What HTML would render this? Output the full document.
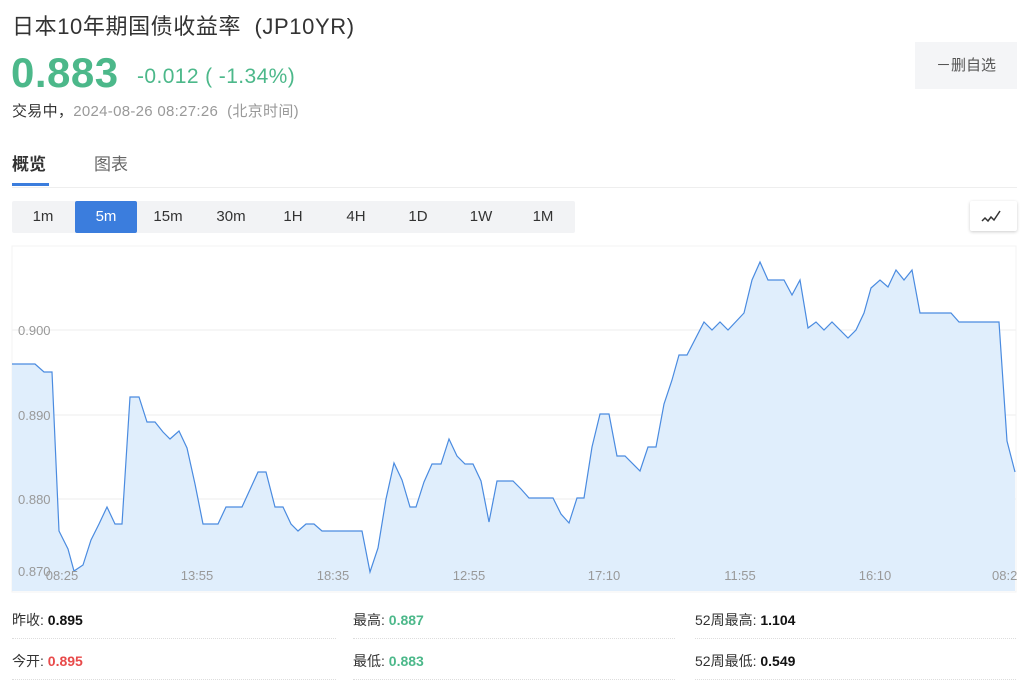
<!DOCTYPE html>
<html><head><meta charset="utf-8"><style>
*{margin:0;padding:0;box-sizing:border-box}
body{width:1024px;height:685px;overflow:hidden;background:#fff;font-family:"Liberation Sans","Noto Sans CJK SC",sans-serif;color:#333;position:relative}
.a{position:absolute;white-space:nowrap}
.per{position:absolute;left:12px;top:201px;width:563px;height:32px;background:#f2f3f5;border-radius:2px}
.per span{position:absolute;top:0;width:62px;height:32px;line-height:32px;text-align:center;font-size:15px;color:#333}
.per span.on{background:#3b7ddd;color:#fff;border-radius:2px}
.st{position:absolute;font-size:14px;color:#333}
.st b{font-weight:bold;color:#111}
.ln{position:absolute;height:0;border-top:1px dotted #ddd}
</style></head><body>
<div class="a" style="left:12px;top:9px;font-size:22px;color:#333;letter-spacing:0.6px">日本10年期国债收益率&nbsp;&nbsp;(JP10YR)</div>
<div class="a" style="left:11px;top:49px;font-size:42px;font-weight:bold;color:#4cb88a;letter-spacing:0.5px">0.883</div>
<div class="a" style="left:137px;top:65px;font-size:21px;color:#4cb88a;letter-spacing:0.4px">-0.012 ( -1.34%)</div>
<div class="a" style="left:12px;top:100px;font-size:15px;color:#333;font-weight:normal;letter-spacing:0.3px">交易中，<span style="color:#999">2024-08-26 08:27:26&nbsp;&nbsp;(北京时间)</span></div>
<div class="a" style="left:915px;top:42px;width:102px;height:47px;background:#f4f5f7;font-size:15px;color:#555;text-align:center;line-height:47px">－删自选</div>
<div class="a" style="left:12px;top:150px;font-size:17px;font-weight:bold;color:#333">概览</div>
<div class="a" style="left:94px;top:150px;font-size:17px;color:#666">图表</div>
<div class="a" style="left:12px;top:183px;width:37px;height:3px;background:#3b7ddd"></div>
<div class="a" style="left:12px;top:187px;width:1005px;height:1px;background:#eee"></div>
<div class="per"><span style="left:0">1m</span><span class="on" style="left:63px">5m</span><span style="left:125px">15m</span><span style="left:188px">30m</span><span style="left:250px">1H</span><span style="left:313px">4H</span><span style="left:375px">1D</span><span style="left:438px">1W</span><span style="left:500px">1M</span></div>
<div class="a" style="left:970px;top:201px;width:47px;height:30px;background:#fff;box-shadow:0 1px 3px rgba(0,0,0,.2);border-radius:2px">
<svg width="47" height="30"><polyline points="12,20 15,17 18,20 21,16 24,19 30,10" fill="none" stroke="#333" stroke-width="1.5"/></svg></div>
<svg class="a" style="left:0;top:0" width="1024" height="600">
<rect x="12" y="246" width="1004" height="346" fill="none" stroke="#f3f3f3"/>
<g stroke="#eee" stroke-width="1"><line x1="12" y1="330" x2="1016" y2="330"/><line x1="12" y1="415" x2="1016" y2="415"/><line x1="12" y1="499" x2="1016" y2="499"/></g>
<polygon fill="#e0eefc" points="12,591 12,364 35,364 44,372 52,372 59,531 68,549 74,571 83,565 91,540 99,524 107,507 115,524 122,524 130,397 139,397 147,422 155,422 163,432 170,439 179,431 187,448 195,484 203,524 218,524 226,507 242,507 258,472 266,472 275,507 283,507 291,524 298,531 306,524 314,524 322,531 362,531 370,572 378,548 386,499 394,463 402,480 410,507 416,507 424,482 432,464 441,464 449,439 457,456 465,464 473,464 481,481 489,522 497,481 513,481 521,489 529,498 553,498 561,514 569,523 577,498 584,498 592,447 600,414 609,414 617,456 625,456 640,471 648,447 656,447 664,404 672,380 679,355 687,355 704,322 712,330 720,322 728,330 744,313 752,280 760,262 768,280 784,280 792,295 800,280 808,328 816,322 824,330 832,322 848,338 856,330 864,313 871,288 880,280 888,287 896,270 904,280 912,270 920,313 951,313 959,322 999,322 1007,441 1015,472 1015,591"/>
<polyline fill="none" stroke="#4a8be0" stroke-width="1.2" points="12,364 35,364 44,372 52,372 59,531 68,549 74,571 83,565 91,540 99,524 107,507 115,524 122,524 130,397 139,397 147,422 155,422 163,432 170,439 179,431 187,448 195,484 203,524 218,524 226,507 242,507 258,472 266,472 275,507 283,507 291,524 298,531 306,524 314,524 322,531 362,531 370,572 378,548 386,499 394,463 402,480 410,507 416,507 424,482 432,464 441,464 449,439 457,456 465,464 473,464 481,481 489,522 497,481 513,481 521,489 529,498 553,498 561,514 569,523 577,498 584,498 592,447 600,414 609,414 617,456 625,456 640,471 648,447 656,447 664,404 672,380 679,355 687,355 704,322 712,330 720,322 728,330 744,313 752,280 760,262 768,280 784,280 792,295 800,280 808,328 816,322 824,330 832,322 848,338 856,330 864,313 871,288 880,280 888,287 896,270 904,280 912,270 920,313 951,313 959,322 999,322 1007,441 1015,472"/>
<g font-family="Liberation Sans,sans-serif" font-size="13" fill="#999">
<text x="18" y="335">0.900</text><text x="18" y="420">0.890</text><text x="18" y="504">0.880</text><text x="18" y="576">0.870</text>
<g text-anchor="middle"><text x="62" y="580">08:25</text><text x="197" y="580">13:55</text><text x="333" y="580">18:35</text><text x="469" y="580">12:55</text><text x="604" y="580">17:10</text><text x="740" y="580">11:55</text><text x="875" y="580">16:10</text></g>
<text x="992" y="580">08:2</text></g>
</svg>
<div class="st" style="left:12px;top:610px">昨收: <b>0.895</b></div>
<div class="st" style="left:353px;top:610px">最高: <b style="color:#4cb88a">0.887</b></div>
<div class="st" style="left:695px;top:610px">52周最高: <b>1.104</b></div>
<div class="st" style="left:12px;top:651px">今开: <b style="color:#e84a4a">0.895</b></div>
<div class="st" style="left:353px;top:651px">最低: <b style="color:#4cb88a">0.883</b></div>
<div class="st" style="left:695px;top:651px">52周最低: <b>0.549</b></div>
<div class="ln" style="left:12px;top:638px;width:324px"></div><div class="ln" style="left:353px;top:638px;width:322px"></div><div class="ln" style="left:695px;top:638px;width:321px"></div>
<div class="ln" style="left:12px;top:679px;width:324px"></div><div class="ln" style="left:353px;top:679px;width:322px"></div><div class="ln" style="left:695px;top:679px;width:321px"></div>
</body></html>
